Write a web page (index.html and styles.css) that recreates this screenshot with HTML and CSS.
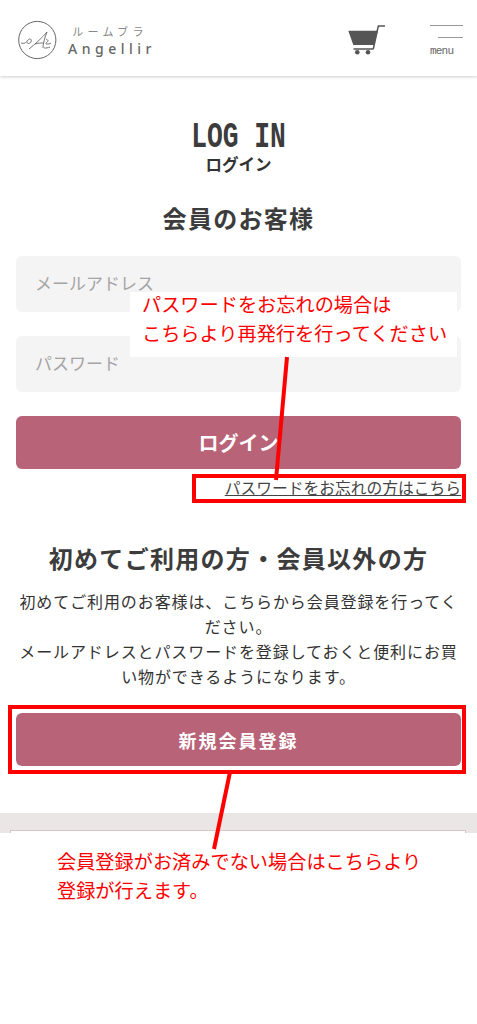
FILE: index.html
```html
<!DOCTYPE html>
<html lang="ja">
<head>
    <meta charset="UTF-8">
    <meta name="viewport" content="width=device-width, initial-scale=1.0">
    <title>ログイン</title>
    <link rel="stylesheet" href="styles.css">
</head>
<body>
    <header class="site-header">
        <a class="logo" href="#">
            <svg class="logo-mark" width="40" height="40" viewBox="0 0 40 40" fill="none" stroke="#666">
                <circle cx="19.300" cy="20" r="18.600" stroke-width="1"/>
                <path d="M3 23c3 1 5 0 7-3 2-2 4-1 3 2-1 2-4 2-4 0M11 29c5-4 13-11 18-17-2 5-4 11-4 16M17 24c3-1 6-1 9-1M28 19c2 1 3 2 1 3-1 1-2 2 0 2 1 0 3 0 4-1M26 28c2 0 4 0 6-1" stroke-width="0.900"/>
            </svg>
            <span class="logo-text">
                <span class="logo-kana">ルームブラ</span>
                <span class="logo-name">Angellir</span>
            </span>
        </a>
        <a class="cart" href="#">
            <svg width="38" height="30" viewBox="0 0 38 30">
                <path d="M0.300 5.700H30L26 20H5.300z" fill="#555"/>
                <path d="M25.300 24 30.300 1H37" fill="none" stroke="#555" stroke-width="1.500"/>
                <path d="M5.500 24h20" stroke="#555" stroke-width="1.500"/>
                <circle cx="9.300" cy="27.300" r="2.300" fill="#555"/>
                <circle cx="20" cy="27.300" r="2.300" fill="#555"/>
            </svg>
        </a>
        <button class="menu-btn" type="button">
            <span class="menu-line"></span>
            <span class="menu-line short"></span>
            <span class="menu-label">menu</span>
        </button>
    </header>

    <main class="content">
        <h1 class="page-title">
            <span class="title-en">LOG IN</span>
            <span class="title-ja">ログイン</span>
        </h1>

        <section class="login">
            <h2 class="section-title">会員のお客様</h2>
            <form>
                <input class="field" type="text" placeholder="メールアドレス">
                <input class="field" type="password" placeholder="パスワード">
                <button class="btn" type="button">ログイン</button>
            </form>
            <p class="forgot"><a href="#">パスワードをお忘れの方はこちら</a></p>
        </section>

        <section class="register">
            <h2 class="section-title">初めてご利用の方・会員以外の方</h2>
            <p class="register-text">初めてご利用のお客様は、こちらから会員登録を行ってください。<br>メールアドレスとパスワードを登録しておくと便利にお買い物ができるようになります。</p>
            <button class="btn btn-register" type="button">新規会員登録</button>
        </section>
    </main>

    <div class="footer-band">
        <div class="footer-box"></div>
    </div>

    <!-- annotations drawn over the page -->
    <div class="note note-password"><span class="note-text">パスワードをお忘れの場合は<br>こちらより再発行を行ってください</span></div>
    <div class="note-frame frame-forgot"></div>
    <div class="note-frame frame-register"></div>
    <div class="note note-register">会員登録がお済みでない場合はこちらより<br>登録が行えます。</div>
    <svg class="note-lines" width="477" height="1024" viewBox="0 0 477 1024">
        <path d="M287 357 276 480M230 772 214 849" stroke="#f00" stroke-width="4" fill="none"/>
    </svg>
</body>
</html>
```

FILE: styles.css
```css
* {
    box-sizing: border-box;
}
body {
    margin: 0;
    height: 1024px;
    overflow: hidden;
    position: relative;
    font-family: "Noto Sans CJK JP", "Noto Sans", sans-serif;
    color: #333;
    background: #fff;
}
a {
    color: inherit;
}

/* header */
.site-header {
    height: 76px;
    display: flex;
    align-items: center;
    padding: 0 14px 0 18px;
    box-shadow: 0 1px 3px rgba(0, 0, 0, 0.2);
}
.logo {
    display: flex;
    align-items: center;
    gap: 10px;
    text-decoration: none;
    margin: 4px auto 0 0;
}
.logo-text {
    display: flex;
    flex-direction: column;
    align-items: center;
    color: #666;
}
.logo-kana {
    font-size: 11px;
    line-height: 16px;
    letter-spacing: 4.300px;
    color: #888;
}
.logo-name {
    font-family: "Noto Sans", sans-serif;
    font-size: 14px;
    line-height: 19px;
    font-weight: 500;
    letter-spacing: 4.500px;
    margin-right: -4px;
}
.cart {
    display: block;
    height: 30px;
    margin: 4px 44px 0 0;
}
.menu-btn {
    width: 33px;
    padding: 0;
    border: 0;
    background: none;
    display: flex;
    flex-direction: column;
    align-items: flex-end;
    font: inherit;
    margin-top: 5px;
}
.menu-line {
    display: block;
    width: 33px;
    height: 1px;
    background: #999;
    margin-bottom: 11px;
}
.menu-line.short {
    width: 25px;
    margin-bottom: 7px;
}
.menu-label {
    align-self: flex-start;
    font-family: "Liberation Mono", monospace;
    font-size: 11px;
    letter-spacing: -0.800px;
    line-height: 12px;
    color: #666;
}

/* main */
.content {
    padding: 0 16px;
}
.page-title {
    margin: 0;
    padding-top: 47px;
    text-align: center;
    font-weight: 400;
}
.title-en {
    display: block;
    font-family: "Liberation Mono", monospace;
    font-size: 36px;
    line-height: 30px;
    font-weight: 700;
    color: #3c3c3c;
    transform: scaleX(0.730);
}
.title-ja {
    display: block;
    font-size: 16.500px;
    line-height: 18px;
    font-weight: 700;
    margin-top: 2px;
}
.section-title {
    margin: 0;
    text-align: center;
    font-size: 24px;
    letter-spacing: 1.300px;
    line-height: 32px;
    font-weight: 700;
    color: #3c3c3c;
}
.login .section-title {
    margin-top: 29px;
    margin-bottom: 22px;
}
.field {
    display: block;
    width: 100%;
    height: 56px;
    margin-bottom: 24px;
    padding: 0 19px 3px;
    border: 0;
    border-radius: 6px;
    background: #f4f4f4;
    font: 17px "Noto Sans CJK JP", sans-serif;
}
.field::placeholder {
    color: #a5a5a5;
}
.btn {
    display: block;
    width: 100%;
    height: 53px;
    border: 0;
    border-radius: 6px;
    background: #b86378;
    color: #fff;
    font: 700 20px "Noto Sans CJK JP", sans-serif;
}
.forgot {
    margin: 9px 0 0;
    text-align: right;
    font-size: 15.750px;
    line-height: 20px;
    color: #444;
}
.register {
    padding-top: 44px;
}
.register .section-title {
    margin-bottom: 15px;
}
.register-text {
    margin: 0 0 24px;
    text-align: center;
    font-size: 16px;
    letter-spacing: 0.900px;
    line-height: 25px;
    color: #333;
}
.btn-register {
    font-size: 18px;
    letter-spacing: 2px;
}

/* footer band, mostly covered by the note below */
.footer-band {
    height: 20px;
    margin-top: 47px;
    padding: 17px 11px 0 10px;
    background: #ebe6e6;
}
.footer-box {
    height: 3px;
    background: #fff;
    border: 1px solid #d8c4c9;
    border-bottom: 0;
}

/* annotations */
.note {
    position: absolute;
    background: #fff;
    color: #f00;
    font-size: 19.200px;
    line-height: 28.500px;
    white-space: nowrap;
}
.note-password {
    left: 130px;
    top: 292px;
    width: 327px;
    height: 65px;
    padding: 0 12px;
}
.note-text {
    display: block;
    margin-top: -2px;
}
.note-register {
    left: 0;
    top: 833px;
    width: 477px;
    height: 191px;
    padding: 14px 0 0 57px;
}
.note-frame {
    position: absolute;
    border: 4px solid #f00;
}
.frame-forgot {
    left: 192px;
    top: 474px;
    width: 274px;
    height: 29px;
}
.frame-register {
    left: 8px;
    top: 705px;
    width: 458px;
    height: 69px;
}
.note-lines {
    position: absolute;
    left: 0;
    top: 0;
    pointer-events: none;
}
```
